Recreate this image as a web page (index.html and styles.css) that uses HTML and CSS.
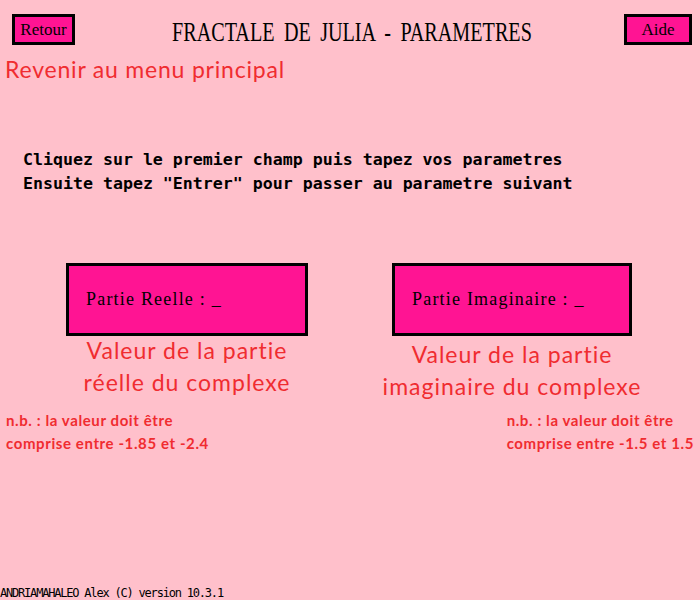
FILE: index.html
```html
<!DOCTYPE html>
<html lang="fr">
<head>
<meta charset="utf-8">
<title>Fractale de Julia - Parametres</title>
<link rel="stylesheet" href="styles.css">
</head>
<body>
<div class="screen">
  <header class="topbar">
    <div class="btn btn-back">Retour</div>
    <h1 class="title"><span class="title-text">FRACTALE DE JULIA - PARAMETRES</span></h1>
    <div class="btn btn-help">Aide</div>
  </header>
  <p class="back-hint">Revenir au menu principal</p>
  <div class="instructions">
    <p>Cliquez sur le premier champ puis tapez vos parametres</p>
    <p>Ensuite tapez "Entrer" pour passer au parametre suivant</p>
  </div>
  <div class="fields">
    <div class="field field-real">
      <div class="input">Partie Reelle : _</div>
      <p class="caption">Valeur de la partie<br>réelle du complexe</p>
    </div>
    <div class="field field-imag">
      <div class="input">Partie Imaginaire : _</div>
      <p class="caption">Valeur de la partie<br>imaginaire du complexe</p>
    </div>
  </div>
  <div class="notes">
    <p class="note">n.b. : la valeur doit être<br>comprise entre -1.85 et -2.4</p>
    <p class="note">n.b. : la valeur doit être<br>comprise entre -1.5 et 1.5</p>
  </div>
  <footer class="credit">ANDRIAMAHALEO Alex (C) version 10.3.1</footer>
</div>
</body>
</html>
```

FILE: styles.css
```css
body {
  margin: 0;
  background: #ffc0cb;
}

p, h1 {
  margin: 0;
}

.screen {
  width: 700px;
  height: 600px;
  display: flex;
  flex-direction: column;
  background: #ffc0cb;
  overflow: hidden;
}

.topbar {
  display: grid;
  grid-template-columns: 1fr auto 1fr;
  align-items: start;
  padding: 14px 8px 0 12px;
}

.btn {
  box-sizing: border-box;
  height: 31px;
  border: 3px solid #000;
  background: #ff1493;
  color: #000;
  font-family: "Liberation Serif", serif;
  font-size: 17px;
  display: flex;
  align-items: center;
  justify-content: center;
}

.btn-back {
  width: 63px;
  justify-self: start;
}

.btn-help {
  width: 68px;
  justify-self: end;
}

.title {
  font-family: "Liberation Serif", serif;
  font-weight: normal;
  font-size: 28px;
  line-height: 36px;
  color: #000;
  text-align: center;
  margin-top: 0;
}

.title-text {
  display: inline-block;
  word-spacing: 6px;
  transform: scaleX(0.72);
}

.back-hint {
  font-family: Lato, sans-serif;
  font-size: 23px;
  letter-spacing: 0.8px;
  line-height: 28px;
  color: #f02c30;
  padding-left: 5px;
  margin-top: 5px;
}

.instructions {
  margin-top: 65px;
  padding-left: 23px;
  font-family: "DejaVu Sans Mono", monospace;
  font-weight: bold;
  font-size: 16.6px;
  line-height: 24px;
  color: #000;
}

.fields {
  display: flex;
  gap: 84px;
  padding-left: 66px;
  margin-top: 67px;
}

.field {
  display: flex;
  flex-direction: column;
  align-items: center;
}

.field-real {
  width: 242px;
}

.field-imag {
  width: 240px;
}

.input {
  box-sizing: border-box;
  width: 100%;
  height: 73px;
  border: 3px solid #000;
  background: #ff1493;
  font-family: "Liberation Serif", serif;
  font-size: 18px;
  letter-spacing: 1.2px;
  color: #000;
  display: flex;
  align-items: center;
  padding-left: 17px;
}

.caption {
  font-family: Lato, sans-serif;
  font-size: 23px;
  letter-spacing: 1px;
  line-height: 32px;
  color: #f02c30;
  text-align: center;
  white-space: nowrap;
  margin-top: -2px;
}

.field-imag .caption {
  margin-top: 2px;
}

.notes {
  display: flex;
  justify-content: space-between;
  padding: 0 6px;
  margin-top: 7px;
}

.note {
  font-family: Lato, sans-serif;
  font-weight: bold;
  font-size: 15px;
  letter-spacing: 0.6px;
  line-height: 23px;
  color: #f02c30;
}

.credit {
  margin-top: auto;
  font-family: "DejaVu Sans Mono", monospace;
  font-size: 12px;
  letter-spacing: -1.2px;
  line-height: 14px;
  color: #000;
}
```
